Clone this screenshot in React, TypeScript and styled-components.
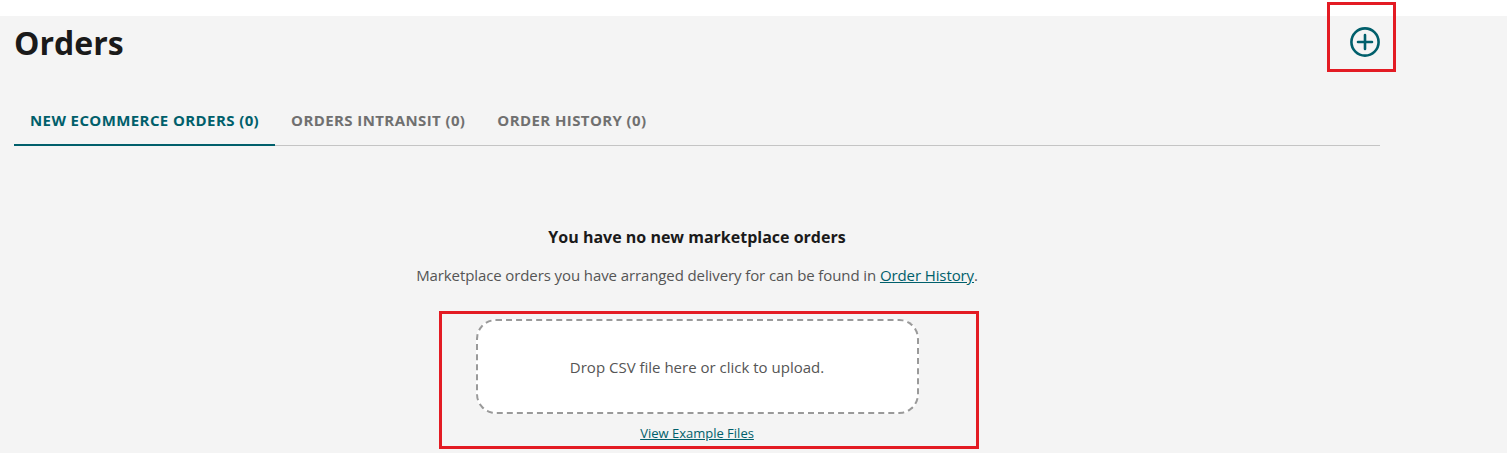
import React from "react";
import styled, { createGlobalStyle } from "styled-components";

const GlobalStyle = createGlobalStyle`
  html, body {
    margin: 0;
    padding: 0;
    background: #ffffff;
  }
  body {
    font-family: "Open Sans", "Liberation Sans", Arial, sans-serif;
  }
`;

const teal = "#005f6b";

const tabs = [
  { label: "NEW ECOMMERCE ORDERS (0)", active: true },
  { label: "ORDERS INTRANSIT (0)", active: false },
  { label: "ORDER HISTORY (0)", active: false },
];

const App = () => {
  return (
    <>
      <GlobalStyle />
      <Page>
        <Container>
          <Header>
            <Title>Orders</Title>
            <AddButton aria-label="Add order">
              <svg width="30" height="30" viewBox="0 0 30 30" fill="none">
                <circle cx="15" cy="15" r="13.6" stroke={teal} strokeWidth="2.6" />
                <path d="M15 8v14M8 15h14" stroke={teal} strokeWidth="2.6" strokeLinecap="round" />
              </svg>
              <Highlight $left={-23} $right={-16} $top={-25} $bottom={-15} />
            </AddButton>
          </Header>

          <TabList>
            {tabs.map((t) => (
              <Tab key={t.label} $active={t.active}>
                {t.label}
              </Tab>
            ))}
          </TabList>

          <Empty>
            <EmptyTitle>You have no new marketplace orders</EmptyTitle>
            <EmptyText>
              Marketplace orders you have arranged delivery for can be found in{" "}
              <TextLink href="#">Order History</TextLink>.
            </EmptyText>
            <Upload>
              <DropZone>Drop CSV file here or click to upload.</DropZone>
              <SmallLink href="#">View Example Files</SmallLink>
              <Highlight $left={-37} $right={-60} $top={-8} $bottom={-7} />
            </Upload>
          </Empty>
        </Container>
      </Page>
    </>
  );
};

export default App;

const Page = styled.div`
  margin-top: 16px;
  background: #f4f4f4;
  min-height: calc(100vh - 16px);
  padding: 7px 14px 0;
  box-sizing: border-box;
`;

const Container = styled.div`
  width: 1366px;
`;

const Header = styled.div`
  display: flex;
  justify-content: space-between;
  align-items: center;
`;

const Title = styled.h1`
  margin: 0;
  font-size: 32px;
  line-height: 40px;
  font-weight: 700;
  color: #1a1a1a;
`;

const AddButton = styled.button`
  position: relative;
  width: 30px;
  height: 30px;
  padding: 0;
  border: 0;
  background: none;
  display: flex;
  margin-top: -3px;
  cursor: pointer;
`;

const Highlight = styled.span<{
  $left: number;
  $right: number;
  $top: number;
  $bottom: number;
}>`
  position: absolute;
  left: ${(p) => p.$left}px;
  right: ${(p) => p.$right}px;
  top: ${(p) => p.$top}px;
  bottom: ${(p) => p.$bottom}px;
  border: 3px solid #e31b23;
  pointer-events: none;
`;

const TabList = styled.div`
  display: flex;
  margin-top: 35px;
  border-bottom: 1px solid #c4c4c4;
`;

const Tab = styled.div<{ $active: boolean }>`
  padding: 12px 16px 14px;
  margin-bottom: -1px;
  font-size: 15px;
  line-height: 20px;
  font-weight: 700;
  letter-spacing: 0.4px;
  color: ${(p) => (p.$active ? teal : "#707070")};
  border-bottom: 2px solid ${(p) => (p.$active ? teal : "transparent")};
  cursor: pointer;
`;

const Empty = styled.div`
  display: flex;
  flex-direction: column;
  align-items: center;
  padding-top: 79px;
`;

const EmptyTitle = styled.h2`
  margin: 0;
  font-size: 16px;
  line-height: 24px;
  font-weight: 700;
  color: #1a1a1a;
`;

const EmptyText = styled.p`
  margin: 15px 0 0;
  font-size: 15px;
  line-height: 22px;
  letter-spacing: -0.1px;
  color: #555555;
`;

const TextLink = styled.a`
  color: ${teal};
  text-decoration: underline;
`;

const Upload = styled.div`
  position: relative;
  margin-top: 33px;
  display: flex;
  flex-direction: column;
  align-items: center;
`;

const DropZone = styled.div`
  width: 443px;
  height: 95px;
  box-sizing: border-box;
  border: 2px dashed #9a9a9a;
  border-radius: 20px;
  background: #ffffff;
  display: flex;
  align-items: center;
  justify-content: center;
  font-size: 15px;
  color: #555555;
`;

const SmallLink = styled.a`
  margin-top: 10px;
  font-size: 13px;
  line-height: 18px;
  color: ${teal};
  text-decoration: underline;
`;
